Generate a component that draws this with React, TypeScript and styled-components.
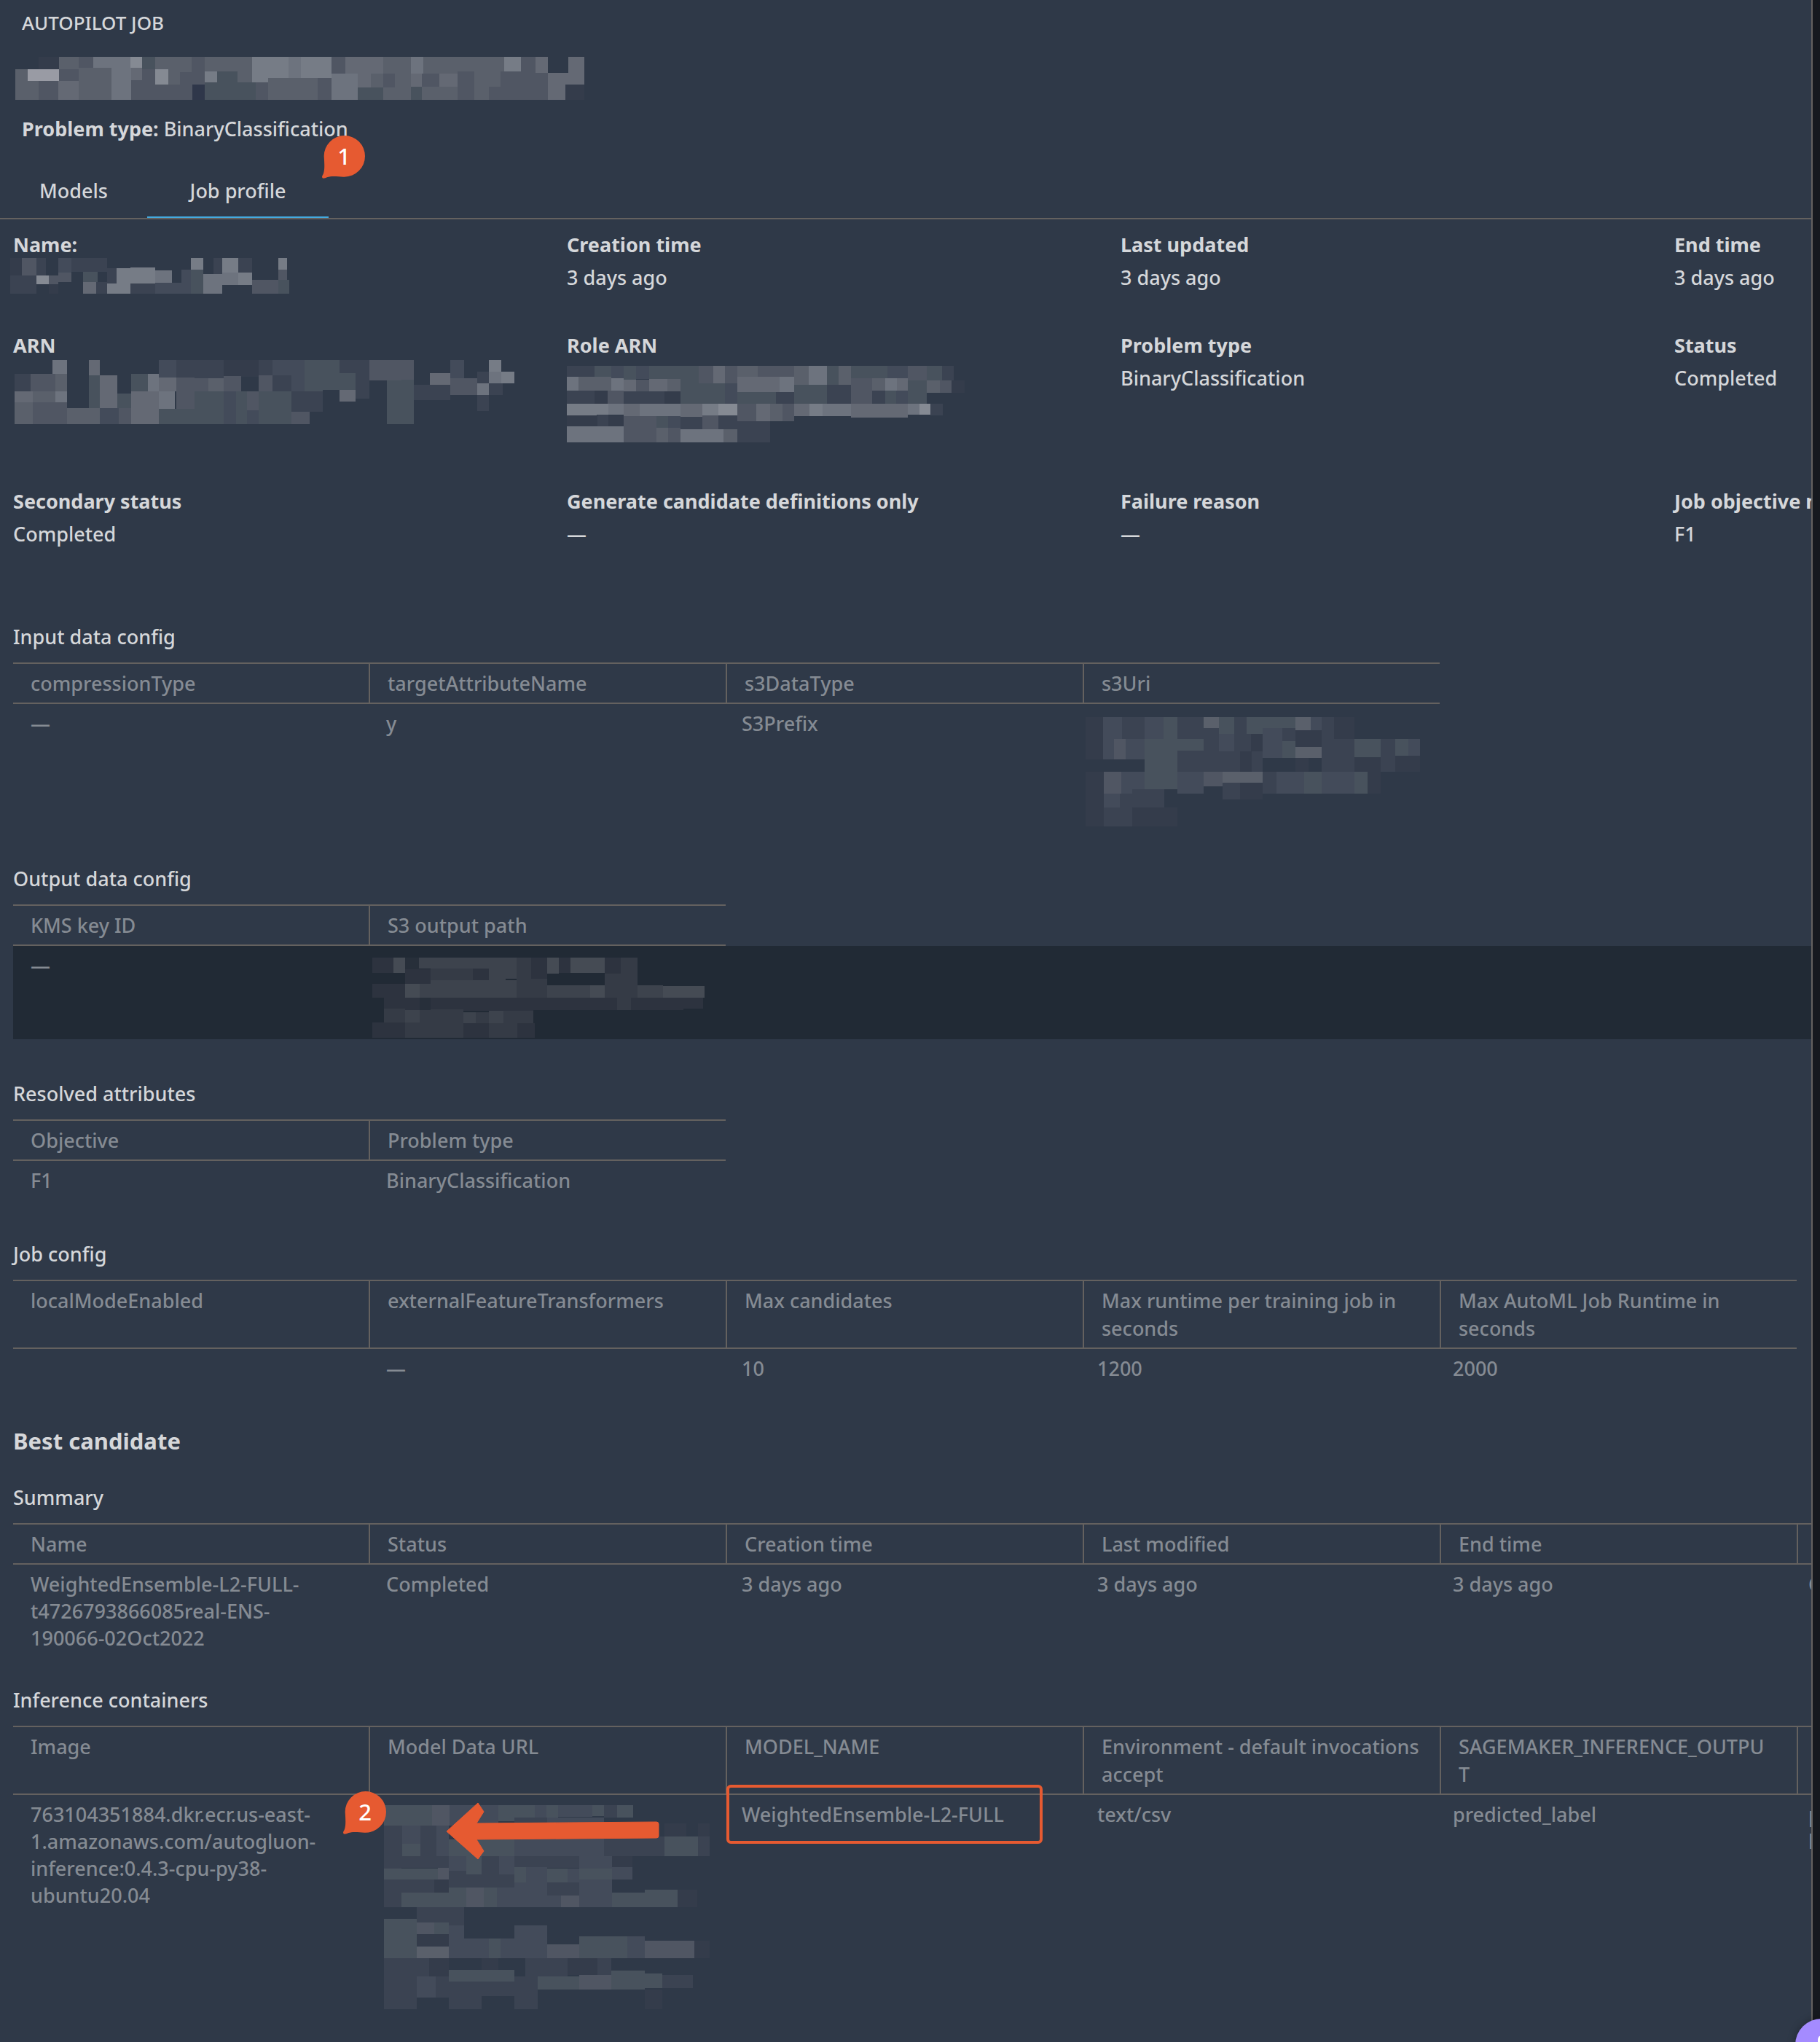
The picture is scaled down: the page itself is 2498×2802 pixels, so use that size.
import React from "react";
import styled, { createGlobalStyle, css } from "styled-components";

const color = {
  bg: "#2f3948",
  rowDark: "#212a35",
  edge: "#16191f",
  line: "#64615f",
  text: "#d5d7da",
  muted: "#858b93",
  accent: "#44aadf",
  mark: "#e65a31",
  help: "#a48bff",
};

const GlobalStyle = createGlobalStyle`
  * { box-sizing: border-box; }
  body {
    margin: 0;
    background: ${color.bg};
    color: ${color.text};
    font-family: "Noto Sans", "Open Sans", sans-serif;
    font-size: 27px;
    font-weight: 500;
    line-height: 37px;
  }
`;

const Page = styled.div`
  display: flex;
  min-height: 100vh;
  background: ${color.edge};
`;

const Panel = styled.main`
  flex: 1;
  min-width: 0;
  margin-right: 10px;
  border-right: 2px solid ${color.line};
  background: ${color.bg};
  overflow: hidden;
`;

const Header = styled.header`
  display: flex;
  flex-direction: column;
  align-items: flex-start;
  padding: 13px 30px 48px;
`;

const Eyebrow = styled.div`
  font-size: 26px;
`;

const JobName = styled.h1`
  margin: 28px 0 21px -9px;
  line-height: 0;
`;

const ProblemType = styled.p`
  margin: 0;
`;

const Tabs = styled.nav`
  position: relative;
  display: grid;
  grid-template-columns: 202px 249px;
  border-bottom: 2px solid ${color.line};
`;

const Tab = styled.button<{ $active?: boolean }>`
  padding: 0 0 17px;
  border: 0;
  border-bottom: 2px solid ${(p) => (p.$active ? color.accent : "transparent")};
  background: none;
  color: inherit;
  font: inherit;
  text-align: center;
`;

const Content = styled.div`
  padding: 16px 0 0 18px;
`;

const Fields = styled.dl`
  display: grid;
  grid-template-columns: repeat(4, 760px);
  row-gap: 55px;
  margin: 0 0 103px;
`;

const Field = styled.div`
  display: flex;
  flex-direction: column;
  gap: 8px;
`;

const Label = styled.dt`
  font-weight: 700;
  white-space: nowrap;
`;

const Value = styled.dd<{ $lines?: number }>`
  position: relative;
  min-height: ${(p) => (p.$lines ?? 1) * 38}px;
  margin: 0;
`;

const Section = styled.section<{ $space: "none" | "small" | "large" }>`
  margin-top: ${(p) => ({ none: 0, small: 39, large: 56 })[p.$space]}px;
`;

const SectionTitle = styled.h3`
  margin: 0 0 17px;
  font-size: 27px;
  font-weight: 500;
`;

const GroupTitle = styled.h2`
  margin: 53px 0 0;
  font-size: 31px;
  line-height: 40px;
  font-weight: 700;
`;

const Table = styled.table`
  display: block;
  color: ${color.muted};

  thead,
  tbody {
    display: block;
  }
`;

const HeadRow = styled.tr`
  display: flex;
  width: max-content;
  border-top: 2px solid ${color.line};
  border-bottom: 2px solid ${color.line};
`;

const BodyRow = styled.tr<{ $dark?: boolean }>`
  display: flex;
  min-width: 100%;
  background: ${(p) => (p.$dark ? color.rowDark : "transparent")};
`;

const cell = css`
  flex: none;
  padding: 8px 24px;
  text-align: left;
  font-weight: 500;
  white-space: pre;
`;

const HeadCell = styled.th`
  ${cell}
  width: 490px;
  padding-bottom: 7px;
  line-height: 38px;
  border-right: 2px solid ${color.line};

  &:last-child {
    width: 488px;
    border-right: 0;
  }
`;

const BodyCell = styled.td<{ $lines?: number }>`
  ${cell}
  position: relative;
  width: 488px;
  min-height: ${(p) => Math.round(((p.$lines ?? 1) * 112) / 3) + 16}px;
`;

/* Pixelated blocks that hide account details */

const tones: Record<string, string> = {
  z: "#2f374a",
  a: "#343c4b",
  b: "#3b4352",
  c: "#434b5a",
  d: "#48525d",
  e: "#505663",
  f: "#5a606b",
  g: "#646974",
  h: "#6d737e",
  i: "#767c86",
  j: "#858a93",
  k: "#999ba4",
  l: "#272f3a",
  m: "#2d333f",
  n: "#353b46",
  o: "#3d434d",
  p: "#454b54",
};

type MosaicName = "job" | "name" | "arn" | "role" | "input" | "output" | "model";

const mosaics: Record<
  MosaicName,
  { width: number; height: number; viewBox: string; blocks: string }
> = {
  job: {
    width: 781,
    height: 59,
    viewBox: "39 234 1458 177",
    blocks:
      "99 234 151 285 a,151 234 202 285 f,202 234 239 279 e,239 234 334 279 h,334 234 364 279 j,364 234 398 285 d,398 234 491 297 f,491 234 525 348 e,525 234 646 294 f,646 234 739 338 i,739 234 771 321 h,771 234 849 321 i,849 234 885 303 e,885 234 982 303 g,982 234 1053 303 f,1053 234 1085 303 h,1085 234 1172 303 f,1172 234 1215 294 f,1215 234 1292 294 f,1292 234 1335 294 i,1335 234 1372 300 e,1372 234 1404 300 g,1456 234 1497 300 g,39 285 71 411 f,71 285 151 333 k,151 285 202 333 e,202 279 286 411 f,286 279 336 411 h,336 279 364 330 g,364 285 398 411 e,398 285 431 348 j,431 297 461 348 f,461 297 491 348 e,525 294 556 338 i,556 294 609 411 d,609 289 646 338 f,39 333 99 411 f,99 333 149 411 e,149 333 202 411 g,336 330 364 411 e,398 348 431 411 e,431 348 493 411 e,493 348 525 411 z,525 338 655 411 d,655 338 687 411 e,687 321 813 411 f,813 321 849 411 e,849 303 917 411 h,917 303 950 360 g,950 303 982 360 f,982 303 1012 360 e,1012 303 1053 411 f,1053 303 1081 357 g,1053 357 1081 411 d,1081 303 1126 357 e,1126 303 1172 357 g,917 360 982 411 d,982 360 1012 411 f,1081 357 1172 411 f,1172 294 1215 411 e,1215 294 1253 411 f,1253 294 1282 357 f,1282 294 1335 357 e,1335 300 1404 357 e,1253 357 1404 411 e,1404 300 1497 348 g,1404 348 1449 411 g,1449 348 1497 411 a",
  },
  name: {
    width: 383,
    height: 49,
    viewBox: "26 1062 715 147",
    blocks:
      "26 1062 56 1134 a,56 1062 93 1134 e,93 1062 118 1134 b,149 1062 183 1122 c,183 1062 274 1119 b,489 1062 521 1110 i,547 1062 569 1128 b,569 1062 610 1122 i,610 1062 646 1122 b,713 1062 735 1110 i,26 1134 93 1209 b,93 1134 125 1170 j,125 1134 149 1170 e,149 1122 183 1161 e,213 1119 250 1161 d,274 1104 299 1167 b,299 1104 334 1167 i,334 1101 398 1167 i,398 1113 441 1164 h,465 1110 489 1209 c,489 1110 521 1209 d,521 1128 569 1209 h,569 1122 610 1173 h,610 1122 646 1173 i,713 1110 735 1152 e,125 1170 149 1209 a,213 1161 246 1209 g,246 1161 274 1209 b,274 1167 334 1209 i,334 1167 398 1209 b,398 1164 465 1209 c,646 1152 713 1209 e,713 1152 741 1209 d",
  },
  arn: {
    width: 686,
    height: 88,
    viewBox: "42 222 1454 264",
    blocks:
      "153 222 195 279 h,259 222 290 285 g,462 222 513 294 c,513 222 651 297 b,651 222 701 288 a,701 222 752 291 a,752 222 792 285 b,792 222 848 285 c,848 222 886 351 c,886 222 939 291 d,939 222 987 345 d,987 222 1034 276 b,1034 222 1074 381 b,1074 222 1204 306 e,1309 222 1350 297 c,1422 222 1458 270 i,42 279 89 351 b,89 279 195 351 e,160 279 195 351 f,259 285 290 420 d,290 285 341 420 g,381 279 430 351 d,430 279 462 351 h,462 294 513 351 g,513 294 566 423 e,566 297 606 351 e,606 297 651 351 f,651 288 701 351 e,752 285 792 351 e,792 285 848 351 b,886 291 939 351 d,987 276 1034 345 d,1125 306 1168 486 d,1168 303 1204 387 d,1168 387 1204 486 d,1204 324 1309 387 b,1250 276 1309 324 g,1309 297 1388 366 e,1388 270 1422 318 b,1422 270 1458 318 h,1458 270 1496 318 i,1388 318 1422 366 h,1422 318 1462 366 b,1388 366 1422 432 b,42 351 95 396 g,95 351 160 396 f,160 351 195 396 h,341 360 381 420 d,381 351 462 486 g,462 351 509 423 h,566 351 718 486 d,718 351 752 429 e,718 429 752 486 c,752 351 848 486 d,848 351 901 435 b,901 351 939 435 b,987 345 1034 393 g,42 396 95 486 f,95 396 195 486 e,195 420 290 486 f,290 420 345 486 c,345 420 381 486 e,462 423 566 486 d,651 351 687 486 c,848 435 901 486 e",
  },
  role: {
    width: 546,
    height: 105,
    viewBox: "85 606 1223 315",
    blocks:
      "85 606 121 651 b,121 606 170 651 b,170 606 222 657 d,222 606 260 657 c,260 606 298 663 d,298 606 338 660 c,338 606 435 660 d,435 606 535 678 d,491 606 535 678 e,535 606 571 678 g,571 606 609 678 e,609 606 672 651 f,672 606 748 651 e,748 606 784 651 e,784 606 829 684 f,829 606 885 684 h,885 606 921 684 d,921 606 959 684 f,959 606 1071 657 d,1071 606 1133 657 c,1133 606 1192 666 e,1192 606 1239 666 d,1239 606 1275 666 b,85 651 121 708 h,121 651 222 708 f,222 657 260 708 h,260 663 298 711 g,298 663 338 711 e,338 660 394 711 g,394 660 435 711 f,435 678 609 762 d,572 678 609 762 c,609 651 706 714 g,706 651 740 714 g,740 651 784 714 h,609 714 728 762 d,728 714 784 762 b,784 684 885 762 d,885 684 959 762 b,959 657 1024 762 e,1024 657 1064 708 f,1064 657 1100 708 h,1100 657 1133 708 g,1133 666 1192 762 d,1192 666 1232 717 f,1232 666 1268 717 e,1268 666 1308 717 a,85 708 170 762 b,170 708 211 762 a,211 708 260 762 e,260 711 435 762 b,386 711 435 762 a,1024 708 1064 762 b,1064 708 1098 762 d,1098 708 1133 762 c,85 762 177 810 i,177 762 213 807 i,213 762 260 807 h,260 762 309 813 g,309 762 435 813 h,435 762 502 816 g,502 762 609 810 i,551 762 609 810 j,609 762 668 834 e,668 762 710 834 g,710 762 748 834 f,748 762 784 834 e,784 762 831 813 g,831 762 871 813 i,871 762 959 813 h,959 762 1133 819 g,1133 762 1169 807 h,1169 762 1203 807 j,1203 762 1241 810 b,85 810 260 855 a,178 807 213 855 b,260 813 361 921 e,361 813 396 861 d,396 813 435 861 c,435 816 502 867 b,502 810 551 867 e,551 810 609 867 b,85 855 222 921 h,222 855 260 921 h,361 861 396 921 f,396 861 435 921 e,435 867 502 921 h,502 867 567 921 h,567 867 609 921 f,609 834 710 921 b",
  },
  input: {
    width: 459,
    height: 150,
    viewBox: "261 312 1091 450",
    blocks:
      "261 312 318 402 a,318 312 380 486 c,380 312 416 402 b,416 312 454 402 b,454 312 516 402 c,516 312 561 402 d,561 312 646 402 b,646 312 696 357 f,696 312 746 381 d,746 312 786 381 b,786 312 839 381 d,839 312 903 357 d,903 312 946 357 d,946 312 995 366 f,995 312 1031 384 c,1031 312 1071 402 b,1071 312 1138 402 a,646 357 696 453 b,696 381 746 453 c,746 381 800 453 b,800 381 839 453 a,839 357 903 480 c,903 357 946 411 b,903 411 946 480 d,946 366 1031 435 a,946 435 995 480 f,995 435 1031 480 f,261 402 318 486 a,354 402 392 486 e,392 402 454 486 c,454 402 561 537 d,561 402 598 450 d,598 402 646 450 d,561 450 598 537 b,598 450 646 537 b,646 453 696 537 b,696 453 765 537 b,765 453 803 537 a,803 453 839 537 b,946 480 988 537 a,1031 402 1138 537 b,1138 402 1186 477 d,1186 402 1224 477 d,1224 402 1271 537 b,1271 402 1314 471 d,1314 402 1352 471 c,1138 477 1224 537 a,1271 471 1352 537 a,261 537 321 762 a,321 537 378 627 e,378 537 454 627 c,454 537 518 609 d,518 537 561 609 d,561 537 599 627 c,599 537 646 627 c,646 537 708 597 e,708 537 839 582 f,708 582 766 651 b,766 582 839 651 a,839 537 884 627 b,884 537 974 627 c,974 537 1031 627 d,1031 537 1138 627 c,1138 537 1181 627 d,1181 537 1224 627 a,321 627 373 684 c,373 627 414 684 b,414 609 518 684 b,321 684 414 762 b,414 684 561 762 a",
  },
  output: {
    width: 456,
    height: 110,
    viewBox: "87 402 1277 330",
    blocks:
      "87 402 168 465 m,168 402 213 465 p,213 402 266 450 l,266 402 370 447 o,370 402 412 447 o,412 402 473 447 o,473 402 600 489 o,600 402 641 489 o,641 402 697 489 n,697 402 759 489 m,759 402 804 468 p,804 402 848 465 m,848 402 980 465 p,980 402 1042 468 m,1042 402 1106 468 n,213 450 266 510 m,266 450 311 510 m,311 447 370 495 n,370 447 412 495 n,412 447 473 495 n,473 447 535 495 m,535 447 600 567 o,87 510 213 567 m,213 510 269 567 p,269 510 311 567 o,311 495 412 567 o,412 495 641 567 o,641 489 708 567 n,708 489 759 567 n,759 516 924 567 o,924 516 980 567 p,980 468 1106 567 n,1106 516 1204 567 o,1204 519 1319 567 p,1319 519 1364 567 p,132 567 213 612 m,213 567 269 618 m,269 567 311 618 l,311 567 437 615 m,437 567 706 621 m,706 567 830 618 m,830 567 910 618 m,910 567 1028 618 m,1028 567 1081 618 n,1081 567 1282 618 m,1282 567 1358 612 m,132 612 213 669 n,213 618 269 669 o,269 618 311 669 n,311 615 384 669 n,384 615 437 669 n,437 627 484 672 o,484 627 535 672 n,535 621 591 672 o,591 621 644 672 n,644 621 706 672 n,87 669 213 732 m,213 669 437 732 n,437 672 535 732 m,535 672 644 732 n,644 672 711 732 m",
  },
  model: {
    width: 447,
    height: 280,
    viewBox: "131 171 674 840",
    blocks:
      "131 171 231 255 d,231 171 266 255 e,266 171 368 255 c,368 171 401 237 d,401 171 443 222 d,443 171 467 222 c,467 171 492 240 d,492 171 562 220 c,562 171 586 216 d,586 171 614 222 b,614 171 647 222 d,401 222 469 300 b,469 222 586 300 c,131 255 169 381 b,169 255 207 330 c,207 255 239 330 b,239 255 265 330 c,169 330 207 381 d,207 330 239 381 b,239 330 265 381 c,265 311 401 381 d,401 300 535 381 c,535 300 586 381 c,586 300 671 381 b,671 300 712 381 b,712 247 757 300 a,781 247 805 300 a,712 300 781 381 d,781 300 805 381 b,131 381 167 432 b,167 381 207 430 b,207 381 265 430 b,265 381 302 441 c,302 381 333 456 d,333 381 369 456 b,369 381 401 456 c,401 381 469 426 b,469 381 535 430 b,535 381 603 432 c,603 381 645 426 a,131 432 265 477 d,243 430 265 477 e,265 441 302 510 b,302 456 369 510 b,369 456 401 510 b,401 426 425 489 d,425 426 469 489 c,469 432 511 489 d,511 432 535 489 c,535 432 603 477 d,603 426 645 477 c,131 477 167 591 b,167 477 235 531 b,235 477 265 531 a,167 531 265 591 d,265 510 302 591 d,302 510 338 591 e,338 510 365 591 d,365 510 401 591 c,401 489 469 591 c,469 489 535 543 b,469 543 498 591 c,498 543 535 591 e,535 477 603 591 c,603 531 671 591 d,671 519 739 591 d,739 519 779 591 a,199 591 265 654 b,265 591 297 666 b,131 639 161 702 d,161 639 199 702 d,199 654 235 702 e,235 654 265 702 d,131 702 199 801 d,199 702 265 753 a,199 753 235 801 f,235 753 265 801 f,265 666 297 801 c,297 720 348 801 c,348 720 373 801 d,373 720 401 801 c,401 666 469 801 c,469 744 499 801 e,499 744 535 801 e,535 711 603 801 d,603 711 635 801 d,635 711 671 801 c,671 729 739 801 e,739 729 773 801 e,773 729 805 801 a,131 801 225 876 b,225 801 265 876 a,333 801 368 849 a,424 801 449 876 b,449 801 511 876 b,511 801 573 870 a,573 801 602 870 b,131 876 199 1011 b,199 876 238 963 c,238 876 265 963 b,265 849 306 897 d,306 849 333 897 d,333 849 401 897 d,265 897 333 1011 b,333 897 375 957 b,375 897 401 957 b,401 876 449 1011 b,449 876 535 930 d,535 870 602 930 e,602 852 671 930 d,671 864 707 924 d,707 870 770 924 b,671 930 707 1011 a",
  },
};

const MosaicSvg = styled.svg`
  display: block;
`;

const Cover = styled.span<{ $left: number; $top: number }>`
  position: absolute;
  left: ${(p) => p.$left}px;
  top: ${(p) => p.$top}px;
`;

function Mosaic({ name }: { name: MosaicName }) {
  const m = mosaics[name];
  return (
    <MosaicSvg
      width={m.width}
      height={m.height}
      viewBox={m.viewBox}
      preserveAspectRatio="none"
      shapeRendering="crispEdges"
      aria-hidden="true"
    >
      {m.blocks.split(",").map((block, index) => {
        const [x1, y1, x2, y2, tone] = block.split(" ");
        return (
          <rect
            key={index}
            x={+x1}
            y={+y1}
            width={+x2 - +x1}
            height={+y2 - +y1}
            fill={tones[tone]}
          />
        );
      })}
    </MosaicSvg>
  );
}

/* Annotations laid over the page */

const CalloutBox = styled.span<{ $left: number; $top: number }>`
  position: absolute;
  left: ${(p) => p.$left}px;
  top: ${(p) => p.$top}px;
  z-index: 2;
  display: grid;
  width: 60px;
  height: 60px;
  color: #fff;
  font-size: 31px;
  text-align: center;

  > * {
    grid-area: 1 / 1;
  }
`;

const CalloutNumber = styled.span`
  z-index: 1;
  padding: 10px 0 0;
`;

function Callout({ left, top, children }: { left: number; top: number; children: React.ReactNode }) {
  return (
    <CalloutBox $left={left} $top={top}>
      <svg width="60" height="60" viewBox="0 0 180 180" aria-hidden="true">
        <path
          d="M92 0A85 85 0 0 1 92 170C70 171 45 164 20 172C8 179 -3 178 1 166C11 150 11 130 8 85A85 85 0 0 1 92 0Z"
          fill={color.mark}
        />
      </svg>
      <CalloutNumber>{children}</CalloutNumber>
    </CalloutBox>
  );
}

const ArrowSvg = styled.svg`
  position: absolute;
  left: 106px;
  top: 10px;
  z-index: 1;
`;

const Highlight = styled.span`
  position: absolute;
  left: 3px;
  top: -14px;
  width: 434px;
  height: 81px;
  border: 4px solid ${color.mark};
  border-radius: 6px;
`;

const HelpButton = styled.button`
  position: fixed;
  right: -38px;
  bottom: -40px;
  width: 72px;
  height: 72px;
  padding: 0;
  border: 0;
  border-radius: 50%;
  background: ${color.help};
  box-shadow: 0 0 12px rgba(0, 0, 0, 0.3);
`;

type Item = { label: string; value?: string; lines?: number; cover?: React.ReactNode };

const items: Item[] = [
  { label: "Name:", cover: <Cover $left={-4} $top={-8}><Mosaic name="name" /></Cover> },
  { label: "Creation time", value: "3 days ago" },
  { label: "Last updated", value: "3 days ago" },
  { label: "End time", value: "3 days ago" },
  { label: "ARN", cover: <Cover $left={2} $top={-6}><Mosaic name="arn" /></Cover> },
  { label: "Role ARN", lines: 3, cover: <Cover $left={0} $top={2}><Mosaic name="role" /></Cover> },
  { label: "Problem type", value: "BinaryClassification" },
  { label: "Status", value: "Completed" },
  { label: "Secondary status", value: "Completed" },
  { label: "Generate candidate definitions only", value: "—" },
  { label: "Failure reason", value: "—" },
  { label: "Job objective metric", value: "F1" },
];

type DataTableProps = {
  title: string;
  head: string[];
  row: React.ReactNode[];
  lines?: number;
  dark?: boolean;
  space?: "none" | "small" | "large";
};

function DataTable({ title, head, row, lines, dark, space = "large" }: DataTableProps) {
  return (
    <Section $space={space}>
      <SectionTitle>{title}</SectionTitle>
      <Table aria-label={title}>
        <thead>
          <HeadRow>
            {head.map((text, index) => (
              <HeadCell key={index} scope="col">{text}</HeadCell>
            ))}
          </HeadRow>
        </thead>
        <tbody>
          <BodyRow $dark={dark}>
            {row.map((content, index) => (
              <BodyCell key={index} $lines={lines}>{content}</BodyCell>
            ))}
          </BodyRow>
        </tbody>
      </Table>
    </Section>
  );
}

export default function App() {
  return (
    <>
      <GlobalStyle />
      <Page>
        <Panel>
          <Header>
            <Eyebrow>AUTOPILOT JOB</Eyebrow>
            <JobName><Mosaic name="job" /></JobName>
            <ProblemType><b>Problem type:</b> BinaryClassification</ProblemType>
          </Header>
          <Tabs>
            <Tab type="button">Models</Tab>
            <Tab type="button" $active>Job profile</Tab>
            <Callout left={442} top={-57}>1</Callout>
          </Tabs>
          <Content>
            <Fields>
              {items.map((item) => (
                <Field key={item.label}>
                  <Label>{item.label}</Label>
                  <Value $lines={item.lines}>{item.value}{item.cover}</Value>
                </Field>
              ))}
            </Fields>

            <DataTable
              title="Input data config"
              space="none"
              lines={4}
              head={["compressionType", "targetAttributeName", "s3DataType", "s3Uri"]}
              row={["—", "y", "S3Prefix", <Cover $left={8} $top={18}><Mosaic name="input" /></Cover>]}
            />
            <DataTable
              title="Output data config"
              lines={3}
              dark
              head={["KMS key ID", "S3 output path"]}
              row={["—", <Cover $left={5} $top={16}><Mosaic name="output" /></Cover>]}
            />
            <DataTable
              title="Resolved attributes"
              head={["Objective", "Problem type"]}
              row={["F1", "BinaryClassification"]}
            />
            <DataTable
              title="Job config"
              head={[
                "localModeEnabled",
                "externalFeatureTransformers",
                "Max candidates",
                "Max runtime per training job in\nseconds",
                "Max AutoML Job Runtime in\nseconds",
              ]}
              row={["", "—", "10", "1200", "2000"]}
            />

            <GroupTitle>Best candidate</GroupTitle>

            <DataTable
              title="Summary"
              space="small"
              lines={3}
              head={["Name", "Status", "Creation time", "Last modified", "End time", ""]}
              row={[
                "WeightedEnsemble-L2-FULL-\nt4726793866085real-ENS-\n190066-02Oct2022",
                "Completed",
                "3 days ago",
                "3 days ago",
                "3 days ago",
                "Completed",
              ]}
            />
            <DataTable
              title="Inference containers"
              space="small"
              lines={4}
              head={[
                "Image",
                "Model Data URL",
                "MODEL_NAME",
                "Environment - default invocations\naccept",
                "SAGEMAKER_INFERENCE_OUTPU\nT",
                "",
              ]}
              row={[
                "763104351884.dkr.ecr.us-east-\n1.amazonaws.com/autogluon-\ninference:0.4.3-cpu-py38-\nubuntu20.04",
                <>
                  <Cover $left={21} $top={14}><Mosaic name="model" /></Cover>
                  <ArrowSvg width="294" height="80" viewBox="0 0 294 80" aria-hidden="true">
                    <path
                      d="M1 40L44 1L52 13L42 29L289 27Q292 27 292 30V46Q292 49 289 49L42 51L52 67L44 78Z"
                      fill={color.mark}
                      stroke={color.mark}
                      strokeWidth="1"
                      strokeLinejoin="round"
                    />
                  </ArrowSvg>
                  <Callout left={-35} top={-5}>2</Callout>
                </>,
                <>WeightedEnsemble-L2-FULL<Highlight /></>,
                "text/csv",
                "predicted_label",
                "predicted_label,probability,\nlabels",
              ]}
            />
          </Content>
        </Panel>
      </Page>
      <HelpButton type="button" aria-label="Help">
        <svg width="72" height="72" viewBox="0 0 72 72" aria-hidden="true">
          <path d="M31 60V29Q31 23 37 23H60V60Z" fill="#fff" />
        </svg>
      </HelpButton>
    </>
  );
}
